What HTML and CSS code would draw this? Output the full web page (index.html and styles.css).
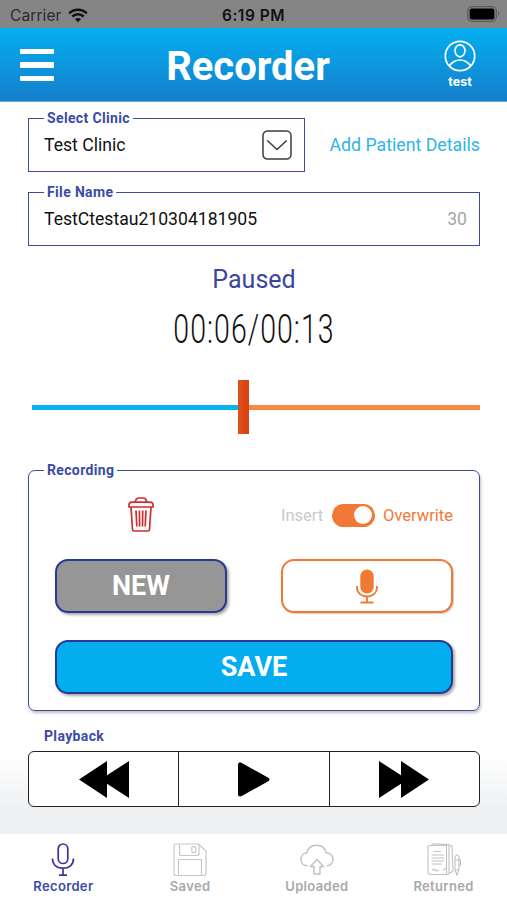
FILE: index.html
```
<!DOCTYPE html>
<html lang="en">
<head>
  <meta charset="UTF-8">
  <title>Recorder</title>
  <link rel="stylesheet" href="styles.css">
</head>
<body>
  <div class="app">
    <div class="status-bar">
      <div class="carrier">
        Carrier
        <svg width="20" height="15" viewBox="0 0 20 15" fill="none" stroke="#111" stroke-width="2.5">
          <path d="M1.2 5.3C6.2 .4 13.8 .4 18.8 5.3M4.3 8.500c3.300-3.100 8.100-3.100 11.400 0"/>
          <path d="M10 14.200L6.900 11.100c1.800-1.600 4.400-1.600 6.200 0z" fill="#111" stroke="none"/>
        </svg>
      </div>
      <div class="clock">6:19 PM</div>
      <div class="battery">
        <svg width="33" height="16" viewBox="0 0 33 16">
          <rect x=".7" y=".7" width="28.6" height="14.6" rx="4" fill="none" stroke="#5b5b5b" stroke-width="1.2"/>
          <rect x="2.6" y="2.6" width="24.8" height="10.8" rx="2" fill="#000"/>
          <path d="M31 5.8c1.5.6 1.5 3.8 0 4.4z" fill="#5b5b5b"/>
        </svg>
      </div>
    </div>

    <div class="header">
      <div class="menu"><span></span><span></span><span></span></div>
      <h1>Recorder</h1>
      <div class="user">
        <svg width="32" height="32" viewBox="0 0 32 32" fill="none" stroke="#fff" stroke-width="1.7">
          <circle cx="16" cy="16" r="14.7"/>
          <ellipse cx="16" cy="10.8" rx="5" ry="6"/>
          <path d="M5.2 26c3-4.100 6.400-6 10.800-6s7.800 1.900 10.800 6"/>
        </svg>
        <div>test</div>
      </div>
    </div>

    <div class="content">
      <div class="clinic-row">
        <fieldset class="field clinic">
          <legend>Select Clinic</legend>
          <div class="field-body">
            <span>Test Clinic</span>
            <svg width="30" height="30" viewBox="0 0 30 30" fill="none" stroke="#3c3c3c" stroke-width="1.500">
              <rect x="1" y="1" width="28" height="28" rx="4.500"/>
              <path d="M5.300 10.500L15 19.500l9.700-9"/>
            </svg>
          </div>
        </fieldset>
        <div class="add-patient">Add Patient Details</div>
      </div>

      <fieldset class="field file">
        <legend>File Name</legend>
        <div class="field-body">
          <span>TestCtestau210304181905</span>
          <span class="count">30</span>
        </div>
      </fieldset>

      <div class="state">Paused</div>
      <div class="timer"><span>00:06/00:13</span></div>

      <div class="slider">
        <div class="played"></div>
        <div class="thumb"></div>
        <div class="remaining"></div>
      </div>

      <fieldset class="field recording">
        <legend>Recording</legend>
        <div class="recording-grid">
          <div class="trash">
            <svg width="26" height="35" viewBox="0 0 26 35" fill="none" stroke="#cf2c30" stroke-width="1.700">
              <path d="M7.300 5.300C7.500 2.500 9 1 11 1h4c2 0 3.500 1.500 3.700 4.300"/>
              <path d="M1 10V8c0-1.800 1.200-2.900 3-2.900h18c1.800 0 3 1.100 3 2.900v2z"/>
              <path d="M3 10l1.500 22.500c.1 1 .6 1.500 1.500 1.500h14c.9 0 1.400-.5 1.500-1.500L23 10"/>
              <path d="M8 13.500l.8 16M11.400 13.500l.2 16M14.700 13.500l-.2 16M18 13.500l-.8 16"/>
            </svg>
          </div>
          <div class="mode">
            <span class="insert">Insert</span>
            <div class="switch"><div class="knob"></div></div>
            <span class="overwrite">Overwrite</span>
          </div>
          <div class="btn btn-new">NEW</div>
          <div class="btn btn-mic">
            <svg width="22" height="35" viewBox="0 0 22 35" fill="none" stroke="#f27935" stroke-width="1.900">
              <rect x="4.300" y=".5" width="13.400" height="24" rx="6.700" fill="#f27935" stroke="none"/>
              <path d="M1 17v1.500c0 5 4 9 10 9s10-4 10-9V17M11 27.500V33M4.500 33.500h13"/>
            </svg>
          </div>
          <div class="btn btn-save">SAVE</div>
        </div>
      </fieldset>

      <div class="playback-label">Playback</div>
      <div class="playback">
        <div>
          <svg width="50" height="37" viewBox="0 0 50 37"><path d="M0 18.500L28 0v14.300L50 0v37L28 22.700V37z"/></svg>
        </div>
        <div>
          <svg width="32" height="35" viewBox="0 0 32 35"><path d="M0 2.500C0 .5 2 0 3.800 1l26.500 14.700c1.600.9 1.600 2.700 0 3.600L3.800 34C2 35 0 34.500 0 32.500z"/></svg>
        </div>
        <div>
          <svg width="50" height="37" viewBox="0 0 50 37"><path d="M50 18.500L22 0v14.300L0 0v37l22-14.300V37z"/></svg>
        </div>
      </div>
    </div>

    <div class="tabs">
      <div class="tab active">
        <svg width="34" height="34" viewBox="0 0 34 34" fill="none" stroke="#3b349b" stroke-width="1.700">
          <rect x="12.200" y="1" width="9.600" height="19.500" rx="4.800"/>
          <path d="M6.500 15.500c0 6.500 4.500 9.700 10.500 9.700s10.500-3.200 10.500-9.700M17 25.200V32M13 32.200h8"/>
        </svg>
        <div>Recorder</div>
      </div>
      <div class="tab">
        <svg width="34" height="34" viewBox="0 0 34 34" fill="none" stroke="#c6c8ca" stroke-width="1.200">
          <path d="M3 1h22.500l7.500 7v22.500c0 1.300-.7 2-2 2H3c-1.300 0-2-.7-2-2V3c0-1.300.7-2 2-2z"/>
          <path d="M6.500 1v9.500c0 1.300.7 2 2 2H24c1.300 0 2-.7 2-2V1M5.500 32.500v-16h23v16"/>
          <rect x="18.800" y="3.600" width="4" height="6" rx="1"/>
        </svg>
        <div>Saved</div>
      </div>
      <div class="tab">
        <svg width="34" height="34" viewBox="0 0 34 34" fill="none" stroke="#c0c0c0" stroke-width="1.400">
          <path d="M7.500 22.800C3.500 22.800 1 20.200 1 16.300s2.700-6.300 6-6.600C8 5 11.500 2.300 16.500 2.300c5.200 0 8.600 3 9.500 7.400 4 .4 7 3 7 6.700 0 3.800-3 6.400-6 6.400"/>
          <path d="M17 16.500l-6.500 7H14V31h6v-7.500h3.500z" stroke-linejoin="round"/>
        </svg>
        <div>Uploaded</div>
      </div>
      <div class="tab">
        <svg width="34" height="34" viewBox="0 0 34 34" fill="none" stroke="#c2c2c2" stroke-width="1.100">
          <path d="M2 2.500h17.500v29H4c-1.500 0-3-1-3-3V3.500c0-.6.400-1 1-1z"/>
          <path d="M5 2.500C5 1 6 .7 7 .9l15 .7V30c0 1-1 1.500-2.500 1.500M22 2.500l3 .5 1 25.500-4 1.500"/>
          <path d="M7 8.500h7M4.500 12H17M4.500 15H17M4.500 18H17M4.500 21H15M5 28c2-4 3-1 3-.5s2-.5 4 .3M16 28l3-3.500"/>
          <path d="M28 16c0-2 .7-4 2-4s2 2 2 4v11l-2 5-2-5zM28 17h4M28 27h4M32 15l1.500 3v5"/>
        </svg>
        <div>Returned</div>
      </div>
    </div>
  </div>
</body>
</html>
```
FILE: styles.css
```
* {
  box-sizing: border-box;
}
body {
  margin: 0;
  font-family: Roboto, "Liberation Sans", sans-serif;
  color: #111;
}
svg {
  display: block;
}
.app {
  width: 507px;
  height: 900px;
  display: flex;
  flex-direction: column;
  overflow: hidden;
}
.status-bar {
  height: 28px;
  background: #858585;
  display: grid;
  grid-template-columns: 1fr 1fr 1fr;
  align-items: center;
  padding: 2px 7px 0 10px;
  font-family: Inter, sans-serif;
  font-size: 15.5px;
}
.carrier {
  display: flex;
  align-items: center;
  gap: 6px;
  color: #2b2b2b;
  letter-spacing: 0.1px;
}
.clock {
  padding-right: 3px;
  text-align: center;
  font-weight: 600;
  letter-spacing: 0.5px;
}
.battery {
  display: flex;
  justify-content: flex-end;
  margin-top: -3px;
}
.header {
  height: 74px;
  padding-top: 1px;
  background: linear-gradient(#03aff0, #157fcb);
  border-bottom: 1px solid #5ea9dc;
  display: grid;
  grid-template-columns: 94px 1fr 94px;
  align-items: center;
  color: #fff;
}
.menu {
  display: flex;
  flex-direction: column;
  gap: 8px;
  width: 34px;
  margin-left: 20px;
}
.menu span {
  height: 5.5px;
  background: #fff;
  border-radius: 1px;
}
h1 {
  margin: 0;
  padding: 2px 11px 0 0;
  text-align: center;
  font-size: 40px;
  font-weight: 700;
}
.user {
  display: flex;
  flex-direction: column;
  align-items: center;
  font-family: Inter, sans-serif;
  font-size: 12.5px;
  font-weight: 700;
  line-height: 16px;
  gap: 2px;
}
.content {
  flex: 1;
  padding: 8px 27px 0 28px;
  background: linear-gradient(#fff 89%, #eef0f2 97%);
}
.field {
  margin: 0;
  padding: 0;
  min-width: 0;
  border: 1px solid #3d4a9f;
}
.field legend,
.playback-label {
  margin-left: 15px;
  padding: 0 3px;
  color: #3a4ca3;
  font-size: 14px;
  font-weight: 700;
  line-height: 16px;
  letter-spacing: 0.35px;
}
.clinic-row {
  display: flex;
  justify-content: space-between;
}
.clinic {
  width: 277px;
  height: 62px;
}
.field-body {
  display: flex;
  justify-content: space-between;
  align-items: center;
  height: 38px;
  padding: 0 12px 0 15px;
  font-size: 17.6px;
}
.count {
  color: #a5a5a5;
}
.add-patient {
  padding-top: 25px;
  font-size: 17.75px;
  line-height: 21px;
  color: #2eb4e8;
}
.file {
  height: 62px;
  margin-top: 12px;
}
.state {
  margin-top: 19px;
  text-align: center;
  font-size: 25px;
  line-height: 30px;
  color: #3a479d;
}
.timer {
  display: flex;
  justify-content: center;
  margin-top: 10px;
  font-size: 41px;
  font-weight: 300;
  line-height: 48px;
  letter-spacing: 1.5px;
}
/* narrow the digits to a condensed face */
.timer span {
  transform: scaleX(0.695);
}
.slider {
  display: flex;
  align-items: center;
  height: 54px;
  margin: 27px 0 0 4px;
}
.played {
  width: 206px;
  height: 5px;
  background: #06b5ef;
}
.thumb {
  width: 11px;
  height: 54px;
  background: linear-gradient(90deg, #d9521b 40%, #e5400f 50%, #cf4716);
}
.remaining {
  flex: 1;
  height: 5px;
  background: #f68b3f;
}
.recording {
  height: 249px;
  margin-top: 28px;
  border-radius: 7px;
  box-shadow: 1px 2px 3px rgba(0, 0, 0, 0.25);
}
.recording-grid {
  display: grid;
  grid-template-columns: 172px 172px;
  grid-template-rows: 35px 54px 54px;
  justify-content: space-between;
  row-gap: 27px;
  padding: 19px 26px 0;
}
.trash {
  display: flex;
  justify-content: center;
}
.mode {
  display: flex;
  align-items: center;
  justify-content: space-between;
  padding-top: 1px;
  font-size: 16.5px;
}
.insert {
  color: #c9c9c9;
}
.overwrite {
  color: #f27935;
}
.switch {
  display: flex;
  justify-content: flex-end;
  width: 43px;
  height: 23px;
  padding: 2.5px;
  border-radius: 12px;
  background: #f27935;
}
.knob {
  width: 18px;
  height: 18px;
  border-radius: 50%;
  background: #fff;
}
.btn {
  display: flex;
  align-items: center;
  justify-content: center;
  border: 2px solid #263a93;
  border-radius: 13px;
  color: #fff;
  font-size: 27px;
  font-weight: 700;
  box-shadow: 2px 2px 3px rgba(0, 0, 0, 0.35);
}
.btn-new {
  background: #969696;
}
.btn-mic {
  background: #fff;
  border-color: #f27935;
  box-shadow: 1px 1px 1px rgba(0, 0, 0, 0.2);
}
.btn-save {
  grid-column: 1 / 3;
  background: #03adef;
}
.playback-label {
  margin: 17px 0 0 13px;
}
.playback {
  display: flex;
  height: 56px;
  margin-top: 7px;
  border: 1px solid #222;
  border-radius: 6px;
  background: #fff;
}
.playback div {
  flex: 1;
  display: flex;
  align-items: center;
  justify-content: center;
}
.playback div + div {
  border-left: 1px solid #222;
}
.tabs {
  height: 66px;
  display: flex;
  background: #fff;
}
.tab {
  flex: 1;
  display: flex;
  flex-direction: column;
  align-items: center;
  gap: 1px;
  padding-top: 9px;
  font-family: Inter, sans-serif;
  font-size: 13px;
  font-weight: 600;
  line-height: 17px;
  letter-spacing: 0.35px;
  color: #a9a9a9;
}
.tab.active {
  color: #3b4aa8;
}
```
